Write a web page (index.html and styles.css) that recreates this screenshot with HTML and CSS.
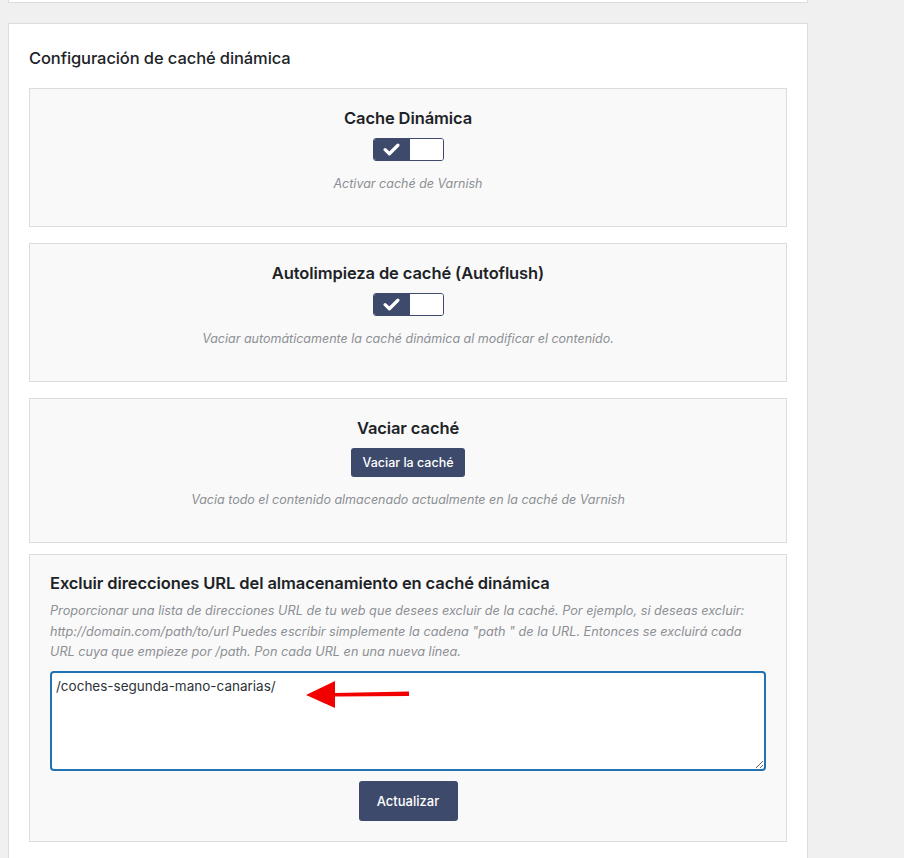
FILE: index.html
```html
<!DOCTYPE html>
<html lang="es">
<head>
  <meta charset="UTF-8" />
  <title>Configuración de caché dinámica</title>
  <meta name="viewport" content="width=device-width, initial-scale=1" />
  <link rel="stylesheet" href="styles.css">
</head>
<body>
  <div class="prev-card"></div>

  <div class="card">
    <h2 class="card-title">Configuración de caché dinámica</h2>

    <div class="panel">
      <h3 class="panel-title">Cache Dinámica</h3>
      <label class="toggle">
        <span class="toggle-on">
          <svg width="17" height="13" viewBox="0 0 16 12"><path d="M2 6.2l4 3.8 8-8" fill="none" stroke="#fff" stroke-width="3" stroke-linecap="round" stroke-linejoin="round"/></svg>
        </span>
        <span class="toggle-off"></span>
      </label>
      <p class="desc">Activar caché de Varnish</p>
    </div>

    <div class="panel">
      <h3 class="panel-title">Autolimpieza de caché (Autoflush)</h3>
      <label class="toggle">
        <span class="toggle-on">
          <svg width="17" height="13" viewBox="0 0 16 12"><path d="M2 6.2l4 3.8 8-8" fill="none" stroke="#fff" stroke-width="3" stroke-linecap="round" stroke-linejoin="round"/></svg>
        </span>
        <span class="toggle-off"></span>
      </label>
      <p class="desc">Vaciar automáticamente la caché dinámica al modificar el contenido.</p>
    </div>

    <div class="panel panel-tight">
      <h3 class="panel-title">Vaciar caché</h3>
      <button type="button" class="btn btn-small">Vaciar la caché</button>
      <p class="desc">Vacia todo el contenido almacenado actualmente en la caché de Varnish</p>
    </div>

    <div class="panel panel-left">
      <h3 class="panel-title big">Excluir direcciones URL del almacenamiento en caché dinámica</h3>
      <p class="desc">Proporcionar una lista de direcciones URL de tu web que desees excluir de la caché. Por ejemplo, si deseas excluir: http://domain.com/path/to/url Puedes escribir simplemente la cadena "path " de la URL. Entonces se excluirá cada URL cuya que empieze por /path. Pon cada URL en una nueva línea.</p>
      <div class="field">
        <textarea class="urls" spellcheck="false">/coches-segunda-mano-canarias/</textarea>
        <!-- annotation arrow -->
        <svg class="arrow" width="110" height="30" viewBox="0 0 110 30"><path d="M104 11.5 L30 13 L30 1 L1 15 L30 28 L30 16.5 L104 16 Z" fill="#f20000"/></svg>
      </div>
      <div class="actions">
        <button type="button" class="btn btn-big">Actualizar</button>
      </div>
    </div>
  </div>
</body>
</html>
```

FILE: styles.css
```css
body {
  margin: 0;
  background: #f0f0f1;
  font-family: Inter, "Open Sans", Arial, sans-serif;
  color: #1d2327;
}
.prev-card {
  height: 2px;
  margin: 0 96px 0 8px;
  background: #fff;
  border: 1px solid #dcdcde;
  border-top: none;
}
.card {
  margin: 20px 96px 0 8px;
  padding: 24px 20px 30px;
  background: #fff;
  border: 1px solid #dcdcde;
}
.card-title {
  margin: 0 0 20px;
  font-size: 16.5px;
  line-height: 20px;
  font-weight: 500;
  letter-spacing: -0.1px;
}
.panel {
  background: #f9f9f9;
  border: 1px solid #dcdcde;
  padding: 19px 20px 33px;
  margin-bottom: 16px;
  text-align: center;
}
.panel-tight {
  margin-bottom: 11px;
}
.panel-title {
  margin: 0 0 10px;
  font-size: 16.5px;
  line-height: 20px;
  font-weight: 600;
  letter-spacing: -0.1px;
}
.desc {
  margin: 14px 0 0;
  font-size: 12.5px;
  line-height: 18px;
  font-style: italic;
  color: #8c8f94;
}
.toggle {
  display: inline-flex;
  width: 71px;
  height: 23px;
  box-sizing: border-box;
  border: 1px solid #3d4a6b;
  border-radius: 3px;
  overflow: hidden;
  vertical-align: top;
}
.toggle-on {
  width: 36px;
  background: #3d4a6b;
  display: flex;
  align-items: center;
  justify-content: center;
}
.toggle-off {
  flex: 1;
  background: #fff;
}
.btn {
  background: #3d4a6b;
  color: #fff;
  border: none;
  border-radius: 3px;
  font-family: Inter, "Open Sans", Arial, sans-serif;
  font-weight: 500;
  cursor: pointer;
  vertical-align: top;
}
.btn-small {
  height: 29px;
  padding: 0 11px;
  font-size: 12.5px;
}
.btn-big {
  height: 40px;
  width: 99px;
  font-size: 13px;
}
.panel-left {
  text-align: left;
  padding: 17px 20px 20px;
  margin-bottom: 0;
}
.panel-title.big {
  font-size: 16.5px;
  line-height: 22px;
  margin-bottom: 7px;
}
.panel-left .desc {
  margin: 0;
  font-size: 12.7px;
  line-height: 20.5px;
}
.field {
  position: relative;
  margin-top: 8px;
}
.urls {
  display: block;
  width: 100%;
  height: 100px;
  box-sizing: border-box;
  border: 2px solid #2271b1;
  border-radius: 4px;
  padding: 3px 4px;
  font-family: Inter, "Open Sans", Arial, sans-serif;
  font-size: 13.5px;
  line-height: 20px;
  color: #2c3338;
  background: #fff;
  outline: none;
}
.arrow {
  position: absolute;
  left: 255px;
  top: 9px;
}
.actions {
  margin-top: 10px;
  text-align: center;
}
```
